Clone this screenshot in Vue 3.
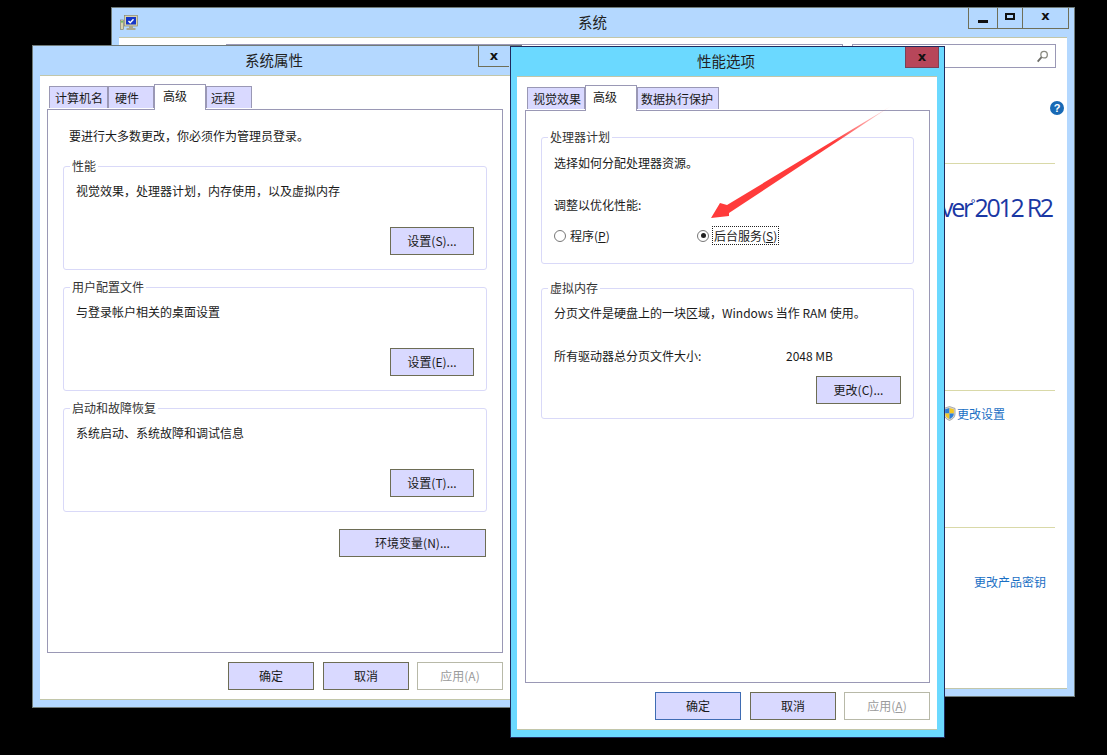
<script setup>
const sysGroups = [
  { title: '性能', text: '视觉效果，处理器计划，内存使用，以及虚拟内存', btn: '设置(S)...' },
  { title: '用户配置文件', text: '与登录帐户相关的桌面设置', btn: '设置(E)...' },
  { title: '启动和故障恢复', text: '系统启动、系统故障和调试信息', btn: '设置(T)...' }
]
const sysTabs = [
  { t: '计算机名', w: 59, p: 5 }, { t: '硬件', w: 46, p: 6 }, { t: '高级', w: 52, p: 8, active: true }, { t: '远程', w: 46, p: 4 }
]
const perfTabs = [
  { t: '视觉效果', w: 58, p: 5 }, { t: '高级', w: 52, p: 7, active: true }, { t: '数据执行保护', w: 82, p: 3 }
]
</script>

<template>
  <div class="desktop">
    <!-- 系统 (back window) -->
    <section class="win win-system">
      <header class="title t-sys">
        <svg class="pc" viewBox="0 0 18 17" width="18" height="17">
          <rect x="4.500" y="1.500" width="13" height="10.500" fill="#d9d4ac" stroke="#8d8a70" stroke-width=".7"/>
          <rect x="6" y="3" width="10" height="7.500" fill="#1536c8"/>
          <path d="M8.500 7l1.700 1.700 3.300-3.500" stroke="#fff" stroke-width="1.400" fill="none"/>
          <rect x=".5" y="6" width="3" height="9.500" fill="#d9d4ac" stroke="#77755f" stroke-width=".6"/>
          <rect x="1.200" y="7.200" width="1.600" height="1.300" fill="#3fae3f"/>
          <path d="M9 12h4v2H9zM6.500 14h9v2h-9z" fill="#a9a78f"/>
        </svg>
        <span class="title-text">系统</span>
        <div class="caps">
          <span class="cap cap-min"><i></i></span>
          <span class="cap cap-max"><i></i></span>
          <span class="cap cap-x">x</span>
        </div>
      </header>
      <div class="sys-client">
        <div class="sys-top">
          <div class="addr"></div>
          <div class="search">
            <svg viewBox="0 0 14 14" width="13" height="13">
              <circle cx="8.700" cy="5" r="3.500" fill="none" stroke="#8a8a80" stroke-width="1.400"/>
              <path d="M6 7.800L1.800 12.400" stroke="#6d6d68" stroke-width="2"/>
            </svg>
          </div>
        </div>
        <div class="help">?</div>
        <div class="sys-right">
          <hr class="rule r1" />
          <div class="brand">ver<sup>°</sup>2012 R2</div>
          <hr class="rule r2" />
          <div class="shield-link">
            <svg viewBox="0 0 14 16" width="13" height="15">
              <path d="M7 .5l6 2v6c0 3.500-3 6-6 7-3-1-6-3.500-6-7v-6z" fill="#d8d8d8" stroke="#8a8a8a" stroke-width=".7"/>
              <path d="M7 2L2.300 3.500V8H7z" fill="#2f7ed8"/>
              <path d="M7 2l4.700 1.500V8H7z" fill="#f4c823"/>
              <path d="M2.300 8H7v6c-2.300-.8-4.700-3-4.700-6z" fill="#f4c823"/>
              <path d="M7 8h4.700c0 3-2.400 5.200-4.700 6z" fill="#2f7ed8"/>
            </svg>
            <span class="link">更改设置</span>
          </div>
          <hr class="rule r3" />
          <div class="link key">更改产品密钥</div>
        </div>
      </div>
    </section>

    <!-- 系统属性 -->
    <section class="win win-props">
      <header class="title t-sys">
        <span class="title-text props-title">系统属性</span>
        <span class="cap-single">x</span>
      </header>
      <div class="client">
        <nav class="tabs">
          <span
            v-for="tab in sysTabs" :key="tab.t"
            class="tab" :class="{ active: tab.active }"
            :style="{ width: tab.w + 'px', paddingLeft: tab.p + 'px' }"
          >{{ tab.t }}</span>
        </nav>
        <div class="pane props-pane">
          <p class="notice">要进行大多数更改，你必须作为管理员登录。</p>
          <div v-for="g in sysGroups" :key="g.title" class="group sys-group">
            <span class="legend">{{ g.title }}</span>
            <p class="g-text">{{ g.text }}</p>
            <button class="btn set-btn">{{ g.btn }}</button>
          </div>
          <div class="env-row"><button class="btn env-btn">环境变量(N)...</button></div>
        </div>
        <footer class="foot">
          <button class="btn">确定</button>
          <button class="btn">取消</button>
          <button class="btn disabled">应用(A)</button>
        </footer>
      </div>
    </section>

    <!-- 性能选项 -->
    <section class="win win-perf">
      <header class="title t-perf">
        <span class="title-text perf-title">性能选项</span>
        <span class="cap-close">x</span>
      </header>
      <div class="client perf-client">
        <nav class="tabs">
          <span
            v-for="tab in perfTabs" :key="tab.t"
            class="tab" :class="{ active: tab.active }"
            :style="{ width: tab.w + 'px', paddingLeft: tab.p + 'px' }"
          >{{ tab.t }}</span>
        </nav>
        <div class="pane perf-pane">
          <div class="group cpu-group">
            <span class="legend">处理器计划</span>
            <p class="p-line">选择如何分配处理器资源。</p>
            <p class="p-line adjust">调整以优化性能:</p>
            <div class="radios">
              <label class="radio r-prog"><span class="dot"></span><span>程序(<u>P</u>)</span></label>
              <label class="radio"><span class="dot on"></span><span class="focus">后台服务(<u>S</u>)</span></label>
            </div>
          </div>
          <div class="group vm-group">
            <span class="legend">虚拟内存</span>
            <p class="p-line">分页文件是硬盘上的一块区域，Windows 当作 RAM 使用。</p>
            <div class="size-row"><span class="size-label">所有驱动器总分页文件大小:</span><span>2048 MB</span></div>
            <div class="chg-row"><button class="btn">更改(C)...</button></div>
          </div>
        </div>
        <footer class="foot">
          <button class="btn default">确定</button>
          <button class="btn">取消</button>
          <button class="btn disabled">应用(<u>A</u>)</button>
        </footer>
      </div>
    </section>

    <!-- annotation arrow -->
    <svg class="arrow" viewBox="0 0 1107 755" width="1107" height="755">
      <defs>
        <linearGradient id="arrowFade" gradientUnits="userSpaceOnUse" x1="891" y1="106" x2="835" y2="142">
          <stop offset="0" stop-color="#ff4040" stop-opacity=".1"/>
          <stop offset="1" stop-color="#ff3b3b"/>
        </linearGradient>
      </defs>
      <polygon points="891,106 727,205 720,203 711,218 729,216 729,213" fill="url(#arrowFade)"/>
    </svg>
  </div>
</template>

<style>
html, body { margin: 0; background: #000; }
</style>

<style scoped>
.desktop {
  position: relative;
  width: 1107px;
  height: 755px;
  background: #000;
  overflow: hidden;
  font-family: "Noto Sans CJK SC", "Noto Sans", sans-serif;
  font-size: 12px;
  color: #1a1a1a;
}
p { margin: 0; }
.win {
  position: absolute;
  box-sizing: border-box;
  display: flex;
  flex-direction: column;
  background: #b4d8ff;
  border: 1px solid #6f7a78;
}
.win-system { left: 111px; top: 7px; width: 964px; height: 690px; }
.win-props { left: 32px; top: 45px; width: 490px; height: 663px; }
.win-perf {
  left: 510px; top: 46px; width: 435px; height: 692px;
  background: #6bd9ff;
  border-color: #1f2a5c;
}
.title { position: relative; height: 29px; flex: none; display: flex; align-items: center; }
.title-text { font-size: 14.500px; color: #222; position: absolute; top: 3px; }
.win-system .title-text { left: 466px; }
.props-title { left: 212px; }
.perf-title { left: 186px; }
.pc { position: absolute; left: 8px; top: 6px; }
.caps {
  position: absolute; right: 5px; top: 0;
  display: flex; height: 20px;
  border: 1px solid #6f6f58; border-top: 0;
}
.cap { display: flex; align-items: center; justify-content: center; box-sizing: border-box; }
.cap + .cap { border-left: 1px solid #6f6f58; }
.cap-min { width: 28px; }
.cap-min i { width: 10px; height: 3px; background: #111; margin-top: 6px; }
.cap-max { width: 25px; }
.cap-max i { width: 6px; height: 3px; border: 2px solid #111; margin-bottom: 3px; }
.cap-x, .cap-single, .cap-close {
  font-family: "DejaVu Sans", sans-serif; font-weight: 700; font-size: 13px; color: #111; line-height: 1;
}
.cap-x { width: 46px; padding-bottom: 5px; }
.cap-single {
  position: absolute; left: 445px; top: 0; width: 31px; height: 21px;
  display: flex; align-items: center; justify-content: center;
  border: 1px solid #6f6f58; border-top: 0; border-right: 0; padding-bottom: 2px; box-sizing: border-box;
}
.cap-close {
  position: absolute; right: 5px; top: 0; width: 34px; height: 21px;
  display: flex; align-items: center; justify-content: center;
  background: #b7465a; border: 1px solid #7a4056; border-top: 0; box-sizing: border-box; padding-bottom: 2px;
}

/* back window body */
.sys-client {
  position: relative;
  flex: 1;
  margin: 0 7px 7px;
  background: #fff;
  border-top: 1px solid #c2c6a9;
  border-bottom: 1px solid #c2c6a9;
  display: flex;
  flex-direction: column;
  align-items: flex-end;
}
.sys-top { display: flex; align-items: flex-start; gap: 9px; width: 100%; justify-content: flex-end; padding: 6px 11px 0 0; box-sizing: border-box; }
.addr { width: 617px; height: 24px; border: 1px solid #9a98b5; box-sizing: border-box; }
.search {
  width: 204px; height: 24px; border: 1px solid #9a98b5; box-sizing: border-box;
  display: flex; align-items: center; justify-content: flex-end; padding-right: 6px;
}
.help {
  position: absolute; right: 3px; top: 63px;
  width: 14px; height: 14px; border-radius: 50%;
  background: #1769b5; color: #fff; font: 700 11px/14px "Liberation Sans", sans-serif; text-align: center;
}
.sys-right { width: 124px; padding-right: 12px; box-sizing: border-box; display: flex; flex-direction: column; }
.rule { margin: 0; border: 0; border-top: 1px solid #d9d9a8; width: 112px; }
.r1 { margin-top: 95px; }
.brand {
  margin-top: 26px; margin-left: -2px; font-family: "Open Sans", "Noto Sans", sans-serif; font-weight: 400;
  font-size: 25px; line-height: 34px; letter-spacing: -2.300px; color: #1a38a4; white-space: nowrap;
}
.brand sup { font-size: 11px; vertical-align: 10px; line-height: 0; letter-spacing: -1px; }
.r2 { margin-top: 166px; }
.shield-link { display: flex; align-items: center; gap: 1px; margin-top: 14px; }
.link { color: #1a6fc4; white-space: nowrap; line-height: 17px; }
.r3 { margin-top: 105px; }
.key { margin-left: 31px; margin-top: 45px; }

/* dialog body */
.client {
  flex: 1;
  margin: 0 7px 7px;
  background: #fff;
  border-top: 1px solid #c2c6a9;
  border-bottom: 1px solid #c2c6a9;
  padding: 10px 8px 0 7px;
  display: flex;
  flex-direction: column;
  min-height: 0;
}
.win-props .client { margin-right: 0; padding-right: 18px; }
.perf-client { margin-left: 6px; padding-left: 8px; }
.tabs { display: flex; height: 23px; padding-left: 2px; align-items: flex-end; flex: none; position: relative; z-index: 1; }
.tab {
  box-sizing: border-box; height: 22px; flex: none;
  border: 1px solid #9a98b5; border-bottom: 0;
  background: #d9d9ff;
  line-height: 21px;
  margin-bottom: 1px;
}
.tab.active {
  height: 26px; background: #fff; margin-bottom: -1px; line-height: 22px; padding-bottom: 3px;
}
.pane {
  box-sizing: border-box;
  border: 1px solid #9a98b5;
  background: #fff;
  flex: none;
}
.props-pane { width: 456px; height: 544px; padding: 17px 15px 0 15px; }
.perf-pane { width: 405px; height: 573px; padding: 26px 15px 0 15px; }
.notice { margin: 0 0 22px 6px; line-height: 17px; }
.group {
  position: relative;
  border: 1px solid #d9d9f8;
  border-radius: 3px;
  box-sizing: border-box;
}
.legend {
  position: absolute; left: 6px; top: -10px; background: #fff; padding: 0 2px; line-height: 17px; color: #333;
}
.sys-group { height: 104px; margin-bottom: 17px; display: flex; flex-direction: column; padding: 15px 12px 14px 12px; }
.g-text { line-height: 17px; }
.set-btn { align-self: flex-end; margin-top: auto; }
.env-row { display: flex; justify-content: flex-end; margin-right: 1px; }
.btn {
  box-sizing: border-box; width: 86px; height: 28px;
  background: #d9d9ff; border: 1px solid #6d6d55;
  font: inherit; color: #1a1a1a; padding: 0; flex: none; line-height: 1;
}
.set-btn { width: 84px; }
.env-btn { width: 147px; }
.btn.default { border-color: #3f6cb3; }
.btn.disabled { background: #fff; border-color: #b8b9a8; color: #9b9b9b; margin-left: -1px; }
.foot { display: flex; justify-content: flex-end; gap: 9px; padding-top: 9px; }
.win-props .foot { width: 456px; box-sizing: border-box; }
.perf-client .foot { width: 405px; box-sizing: border-box; }
.cpu-group { height: 127px; padding: 16px 12px 0; margin-bottom: 24px; }
.vm-group { height: 131px; padding: 15px 12px 0; }
.p-line { line-height: 17px; }
.adjust { margin-top: 25px; }
.radios { display: flex; margin-top: 14px; }
.radio { display: flex; align-items: center; gap: 4px; line-height: 17px; }
.r-prog { width: 143px; }
.dot {
  width: 12px; height: 12px; border: 1px solid #777; border-radius: 50%; box-sizing: border-box;
  background: #fff; position: relative; flex: none;
}
.dot.on::after {
  content: ""; position: absolute; inset: 2.500px; border-radius: 50%; background: #222;
}
.focus { outline: 1px dotted #222; outline-offset: 0; padding: 0 1px; }
.size-row { display: flex; margin-top: 26px; line-height: 17px; }
.size-label { width: 232px; }
.chg-row { display: flex; justify-content: flex-end; margin-top: 12px; }
.chg-row .btn { width: 85px; }
.arrow { position: absolute; left: 0; top: 0; pointer-events: none; }
</style>
